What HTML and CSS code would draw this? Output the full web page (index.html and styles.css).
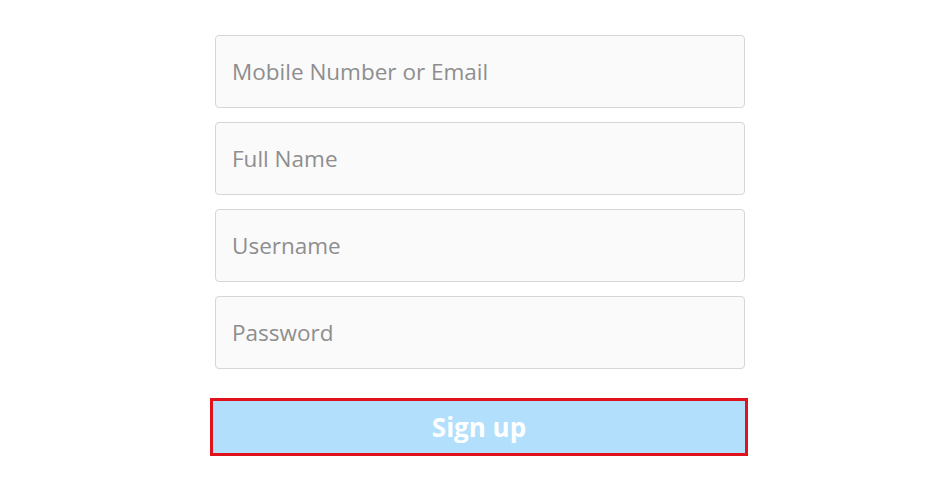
FILE: index.html
```html
<!DOCTYPE html>
<html lang="en">
<head>
  <meta charset="UTF-8" />
  <meta name="viewport" content="width=device-width, initial-scale=1.0" />
  <title>Sign up</title>
  <link rel="stylesheet" href="styles.css">
</head>
<body>
  <form class="signup" onsubmit="return false">
    <input class="field" type="text" placeholder="Mobile Number or Email" />
    <input class="field" type="text" placeholder="Full Name" />
    <input class="field" type="text" placeholder="Username" />
    <input class="field" type="password" placeholder="Password" />
    <button class="submit" type="submit">Sign up</button>
  </form>
</body>
</html>
```

FILE: styles.css
```css
body {
  margin: 0;
  min-height: 500px;
  background: #fff;
  font-family: 'Open Sans', 'Noto Sans', sans-serif;
}
.signup {
  width: 530px;
  margin: 0 0 0 215px;
  padding: 35px 0 44px;
  display: flex;
  flex-direction: column;
  gap: 14px;
}
.field {
  box-sizing: border-box;
  height: 73px;
  padding: 0 16px;
  border: 1.5px solid #d6d6d6;
  border-radius: 4px;
  background: #fafafa;
  font-family: inherit;
  font-size: 22.5px;
  color: #262626;
}
.field::placeholder { color: #8e8e8e; }
.submit {
  box-sizing: border-box;
  width: 532px;
  height: 52px;
  margin: 18px 0 0 -2px;
  border: none;
  outline: 3px solid #e0121b;
  background: #b2dffc;
  color: #fff;
  font-family: inherit;
  font-size: 26px;
  font-weight: bold;
}
```
